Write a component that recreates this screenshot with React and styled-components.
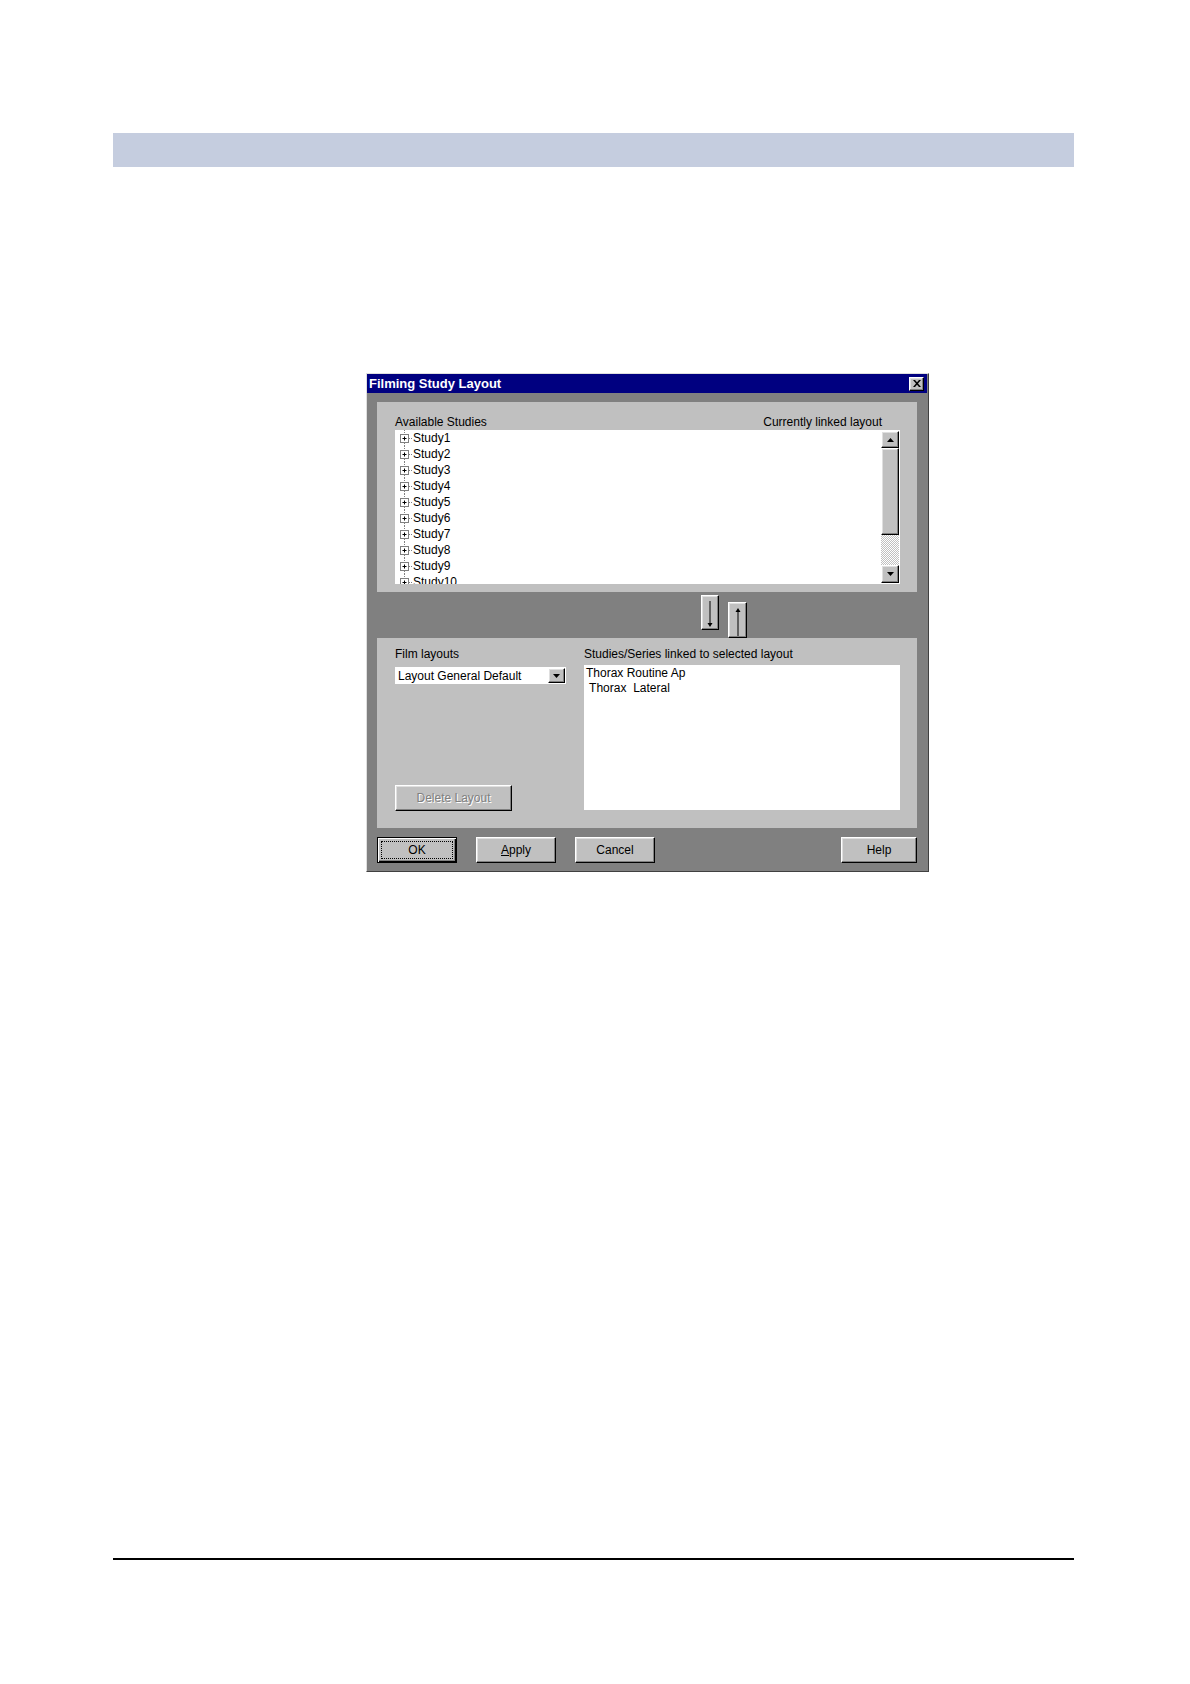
import React from 'react'
import styled, { createGlobalStyle, css } from 'styled-components'

const GlobalStyle = createGlobalStyle`
  body {
    margin: 0;
    background: #fff;
    font-family: "Liberation Sans", Arial, sans-serif;
  }
`

const raised = css`
  box-sizing: border-box;
  background: #c0c0c0;
  border: 1px solid;
  border-color: #fff #000 #000 #fff;
  box-shadow: inset -1px -1px #808080, inset 1px 1px #dfdfdf;
`

const studies = ['Study1', 'Study2', 'Study3', 'Study4', 'Study5', 'Study6', 'Study7', 'Study8', 'Study9', 'Study10']
const linked = ['Thorax Routine Ap', ' Thorax  Lateral']

export default function App() {
  return (
    <Page>
      <GlobalStyle />
      <Band />
      <Dialog>
        <TitleBar>
          <span>Filming Study Layout</span>
          <CloseButton>
            <svg width="8" height="7" viewBox="0 0 8 7">
              <path d="M0 0h2l2 2.3L6 0h2L5 3.5 8 7H6L4 4.7 2 7H0l3-3.5z" fill="#000" />
            </svg>
          </CloseButton>
        </TitleBar>
        <Body>
          <UpperPanel>
            <LabelRow>
              <Label>Available Studies</Label>
              <Label>Currently linked layout</Label>
            </LabelRow>
            <ListBox>
              <TreeArea>
                {studies.map((s) => (
                  <TreeRow key={s}>
                    <svg width="15" height="16" viewBox="0 0 15 16">
                      <path d="M6.5 0v4M6.5 13v3M11 8.5h4" stroke="#808080" strokeDasharray="1 1" />
                      <rect x="2.5" y="4.5" width="8" height="8" fill="#fff" stroke="#808080" />
                      <path d="M4.5 8.5h4M6.5 6.5v4" stroke="#000" />
                    </svg>
                    {s}
                  </TreeRow>
                ))}
              </TreeArea>
              <ScrollBar>
                <ScrollButton $h={17}>
                  <svg width="7" height="4" viewBox="0 0 7 4"><path d="M3.5 0L7 4H0z" fill="#000" /></svg>
                </ScrollButton>
                <Thumb />
                <Track />
                <ScrollButton $h={18}>
                  <svg width="7" height="4" viewBox="0 0 7 4"><path d="M0 0h7L3.5 4z" fill="#000" /></svg>
                </ScrollButton>
              </ScrollBar>
            </ListBox>
          </UpperPanel>

          <MoveStrip>
            <MoveButton $w={18} $h={35} $top={3}>
              <svg width="8" height="35" viewBox="0 0 8 35">
                <path d="M4 5v24" stroke="#000" />
                <path d="M1.5 27h5L4 31z" fill="#000" />
              </svg>
            </MoveButton>
            <MoveButton $w={19} $h={36} $top={10}>
              <svg width="8" height="36" viewBox="0 0 8 36">
                <path d="M4 9v24" stroke="#000" />
                <path d="M4 5l2.5 4h-5z" fill="#000" />
              </svg>
            </MoveButton>
          </MoveStrip>

          <LowerPanel>
            <Column>
              <Label>Film layouts</Label>
              <Combo>
                <ComboText>Layout General Default</ComboText>
                <ComboButton>
                  <svg width="7" height="4" viewBox="0 0 7 4"><path d="M0 0h7L3.5 4z" fill="#000" /></svg>
                </ComboButton>
              </Combo>
              <DeleteButton disabled>Delete Layout</DeleteButton>
            </Column>
            <Column>
              <Label>Studies/Series linked to selected layout</Label>
              <LinkedList>
                {linked.map((l) => (
                  <LinkedItem key={l}>{l}</LinkedItem>
                ))}
              </LinkedList>
            </Column>
          </LowerPanel>

          <ButtonRow>
            <DialogButton $default>
              <Focus>OK</Focus>
            </DialogButton>
            <DialogButton><u>A</u>pply</DialogButton>
            <DialogButton>Cancel</DialogButton>
            <Spacer />
            <DialogButton $w={76}>Help</DialogButton>
          </ButtonRow>
        </Body>
      </Dialog>
      <Rule />
    </Page>
  )
}

const Page = styled.div`
  padding: 133px 0 120px 113px;
`

const Band = styled.div`
  width: 961px;
  height: 34px;
  background: #c5cddf;
`

const Dialog = styled.div`
  box-sizing: border-box;
  width: 563px;
  height: 499px;
  margin: 206px 0 0 253px;
  border: 1px solid;
  border-color: #dfdfdf #404040 #404040 #dfdfdf;
  padding-right: 1px;
  background: #808080;
  font-size: 12px;
  color: #000;
`

const TitleBar = styled.div`
  height: 19px;
  display: flex;
  justify-content: space-between;
  align-items: center;
  padding: 0 3px 0 2px;
  background: #000080;
  color: #fff;
  font-weight: bold;
  font-size: 13px;
  line-height: 19px;
`

const CloseButton = styled.div`
  ${raised};
  width: 15px;
  height: 14px;
  display: flex;
  align-items: center;
  justify-content: center;
`

const Body = styled.div`
  padding: 9px 10px 0 10px;
  display: flex;
  flex-direction: column;
`

const UpperPanel = styled.div`
  height: 190px;
  box-sizing: border-box;
  background: #c0c0c0;
  padding: 13px 17px 8px 18px;
  display: flex;
  flex-direction: column;
`

const LabelRow = styled.div`
  display: flex;
  justify-content: space-between;
  padding-right: 18px;
`

const Label = styled.div`
  line-height: 15px;
  white-space: nowrap;
`

const ListBox = styled.div`
  flex: 1;
  display: flex;
  background: #fff;
  overflow: hidden;
`

const TreeArea = styled.div`
  flex: 1;
  padding-left: 3px;
  overflow: hidden;
`

const TreeRow = styled.div`
  display: flex;
  align-items: center;
  height: 16px;
  line-height: 16px;

  svg {
    flex: none;
  }
`

const ScrollBar = styled.div`
  width: 18px;
  margin: 1px 1px 1px 0;
  display: flex;
  flex-direction: column;
`

const ScrollButton = styled.div`
  ${raised};
  height: ${(p) => p.$h}px;
  display: flex;
  align-items: center;
  justify-content: center;
`

const Thumb = styled.div`
  ${raised};
  height: 87px;
`

const Track = styled.div`
  flex: 1;
  background: repeating-conic-gradient(#c0c0c0 0 25%, #fff 0 50%) 0 0 / 2px 2px;
`

const MoveStrip = styled.div`
  height: 46px;
  display: flex;
  align-items: flex-start;
  gap: 9px;
  padding-left: 324px;
`

const MoveButton = styled.div`
  ${raised};
  width: ${(p) => p.$w}px;
  height: ${(p) => p.$h}px;
  margin-top: ${(p) => p.$top}px;
  display: flex;
  justify-content: center;
`

const LowerPanel = styled.div`
  height: 190px;
  box-sizing: border-box;
  background: #c0c0c0;
  padding: 9px 17px 18px 18px;
  display: grid;
  grid-template-columns: 171px 1fr;
  column-gap: 18px;
`

const Column = styled.div`
  display: flex;
  flex-direction: column;
`

const Combo = styled.div`
  margin-top: 5px;
  height: 17px;
  background: #fff;
  display: flex;
  align-items: center;
  padding: 1px;
  box-sizing: border-box;
`

const ComboText = styled.div`
  flex: 1;
  padding-left: 2px;
  white-space: nowrap;
`

const ComboButton = styled.div`
  ${raised};
  width: 17px;
  height: 15px;
  display: flex;
  align-items: center;
  justify-content: center;
`

const DeleteButton = styled.button`
  ${raised};
  margin-top: auto;
  margin-bottom: -1px;
  width: 117px;
  height: 26px;
  padding: 0;
  font: inherit;
  color: #808080;
  text-shadow: 1px 1px #fff;
`

const LinkedList = styled.div`
  margin-top: 3px;
  flex: 1;
  background: #fff;
  padding: 1px 2px;
`

const LinkedItem = styled.div`
  white-space: pre;
  line-height: 15px;
`

const ButtonRow = styled.div`
  display: flex;
  gap: 19px;
  padding-top: 9px;
`

const Spacer = styled.div`
  flex: 1;
`

const DialogButton = styled.div`
  ${raised};
  width: ${(p) => p.$w || 80}px;
  height: 26px;
  display: flex;
  align-items: center;
  justify-content: center;
  ${(p) =>
    p.$default &&
    css`
      border: 1px solid #000;
      box-shadow: inset 1px 1px #fff, inset -1px -1px #000, inset -2px -2px #808080;
      padding: 3px;
    `}
`

const Focus = styled.div`
  flex: 1;
  align-self: stretch;
  display: flex;
  align-items: center;
  justify-content: center;
  border: 1px dotted #000;
`

const Rule = styled.div`
  width: 961px;
  height: 2px;
  margin-top: 686px;
  background: #000;
`
